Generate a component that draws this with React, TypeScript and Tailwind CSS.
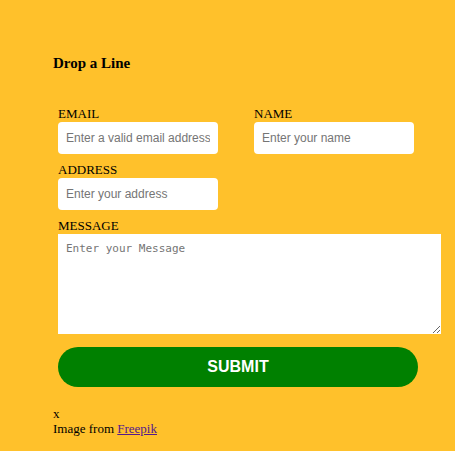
const serif = "font-['Liberation_Serif',serif]";

function Field({ label, placeholder }: { label: string; placeholder: string }) {
  return (
    <div className="flex flex-col">
      <label className="mb-[2px] text-[13px] leading-[13px] text-black">{label}</label>
      <input
        placeholder={placeholder}
        className="h-8 w-40 rounded bg-white px-2 font-['Liberation_Sans',sans-serif] text-[12px] text-black outline-none placeholder:text-[#757575]"
      />
    </div>
  );
}

export default function App() {
  return (
    <div className={`min-h-screen bg-[#ffc12b] pl-[53px] pt-[55px] ${serif}`}>
      <h3 className="text-[15px] font-bold leading-[17px] text-black">Drop a Line</h3>

      <form className="mt-[35px] pl-[5px]" onSubmit={(e) => e.preventDefault()}>
        <div className="flex gap-9">
          <Field label="EMAIL" placeholder="Enter a valid email address" />
          <Field label="NAME" placeholder="Enter your name" />
        </div>
        <div className="mt-[9px]">
          <Field label="ADDRESS" placeholder="Enter your address" />
        </div>
        <div className="mt-[9px] flex flex-col">
          <label className="mb-[2px] text-[13px] leading-[13px] text-black">MESSAGE</label>
          <textarea
            placeholder="Enter your Message"
            className="block h-[100px] w-[383px] bg-white px-2 pt-[8px] font-['DejaVu_Sans_Mono',monospace] text-[11px] leading-[13px] outline-none placeholder:text-[#757575]"
          />
        </div>
        <button
          type="submit"
          className="mt-[13px] h-10 w-[360px] rounded-full bg-[#008000] font-['Liberation_Sans',sans-serif] text-[16px] font-bold text-white"
        >
          SUBMIT
        </button>
      </form>

      <div className="mt-[19px] text-[13px] leading-[15px] text-black">
        <p>x</p>
        <p>
          Image from{" "}
          <a href="#" className="text-[#551a8b] underline">
            Freepik
          </a>
        </p>
      </div>
    </div>
  );
}
